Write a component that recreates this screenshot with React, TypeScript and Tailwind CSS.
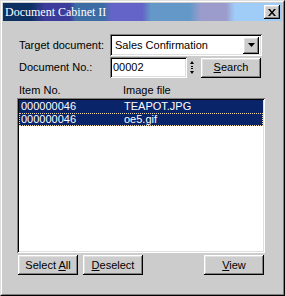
import React from "react";

const raised =
  "bg-[#cccccc] shadow-[inset_-1px_-1px_0_#000,inset_1px_1px_0_#fff,inset_-2px_-2px_0_#808080,inset_2px_2px_0_#dfdfdf]";
const sunken =
  "bg-white shadow-[inset_1px_1px_0_#808080,inset_-1px_-1px_0_#fff,inset_2px_2px_0_#000,inset_-2px_-2px_0_#dfdfdf]";

function Btn({ children, className = "" }: { children: React.ReactNode; className?: string }) {
  return (
    <button
      className={`${raised} h-[20px] w-[60px] flex items-center justify-center text-[11px] text-black leading-none ${className}`}
    >
      {children}
    </button>
  );
}

export default function App() {
  const rows = [
    { no: "000000046", file: "TEAPOT.JPG", focus: false },
    { no: "000000046", file: "oe5.gif", focus: true },
  ];
  return (
    <div
      className="w-[285px] h-[296px] bg-[#cccccc] border border-t-[#dfdfdf] border-l-[#dfdfdf] border-r-black border-b-black"
      style={{ fontFamily: '"Liberation Sans", Arial, sans-serif' }}
    >
      <div className="h-full border border-t-white border-l-white border-r-[#808080] border-b-[#808080] p-[1px] flex flex-col">
        {/* title bar */}
        <div className="h-[18px] flex items-center justify-between bg-[linear-gradient(90deg,#0c3062_0%,#0c3062_10%,#3c3c9c_15%,#3c3c9c_24%,#3c6ca4_26%,#3c6ca4_36%,#6464c8_39%,#6464c8_50%,#6498c8_53%,#6498c8_67%,#9c9ccc_71%,#9c9ccc_80%,#a0ccf8_83%,#a0ccf8_100%)]">
          <span
            className="pl-[2px] text-white text-[12px] leading-none"
            style={{ fontFamily: '"Liberation Serif", "Times New Roman", serif' }}
          >
            Document Cabinet II
          </span>
          <div className={`${raised} w-[16px] h-[14px] mr-[2px] flex items-center justify-center`}>
            <svg width="8" height="7" viewBox="0 0 8 7">
              <path d="M0 0h2l2 2.5L6 0h2L5 3.5 8 7H6L4 4.5 2 7H0l3-3.5z" fill="#000" />
            </svg>
          </div>
        </div>

        {/* body */}
        <div className="flex flex-col pl-[16px] pr-[19px] pt-[13px] text-[11px] text-black">
          <div className="flex items-center h-[22px]">
            <span className="w-[91px]">Target document:</span>
            <div className={`${sunken} w-[152px] h-[22px] flex items-center pl-[5px] pr-[3px]`}>
              <span className="flex-1">Sales Confirmation</span>
              <div className={`${raised} w-[16px] h-[17px] flex items-center justify-center`}>
                <svg width="7" height="4" viewBox="0 0 7 4">
                  <path d="M0 0h7L3.5 4z" fill="#000" />
                </svg>
              </div>
            </div>
          </div>

          <div className="flex items-center h-[21px] mt-[1px]">
            <span className="w-[91px]">Document No.:</span>
            <div className={`${sunken} w-[77px] h-[21px] flex items-center pl-[3px]`}>00002</div>
            <svg width="6" height="17" viewBox="0 0 6 17" className="ml-[2px]">
              <path d="M3 2l2 3H1z" fill="#000" />
              <rect x="2" y="7" width="2" height="1" fill="#000" />
              <rect x="2" y="9" width="2" height="1" fill="#000" />
              <path d="M1 12h4l-2 3z" fill="#000" />
            </svg>
            <Btn className="ml-[6px]">
              <span>
                <u>S</u>earch
              </span>
            </Btn>
          </div>

          <div className="flex items-center h-[13px] mt-[6px]">
            <span className="w-[104px]">Item No.</span>
            <span>Image file</span>
          </div>

          <div className={`${sunken} w-[248px] h-[155px] -ml-[2px] mt-[1px] p-[2px]`}>
            {rows.map((r, i) => (
              <div
                key={i}
                className={`h-[13px] flex items-center bg-[#0a246a] text-white pl-[2px] ${
                  r.focus ? "outline-1 outline-dotted outline-[#f0d8a0] -outline-offset-1" : ""
                }`}
              >
                <span className="w-[103px]">{r.no}</span>
                <span>{r.file}</span>
              </div>
            ))}
          </div>

          <div className="flex items-center mt-[2px] -ml-[1px]">
            <Btn>
              <span>
                Select <u>A</u>ll
              </span>
            </Btn>
            <Btn className="ml-[5px]">
              <span>
                <u>D</u>eselect
              </span>
            </Btn>
            <Btn className="ml-auto -mr-[1px]">
              <span>
                <u>V</u>iew
              </span>
            </Btn>
          </div>
        </div>
      </div>
    </div>
  );
}
